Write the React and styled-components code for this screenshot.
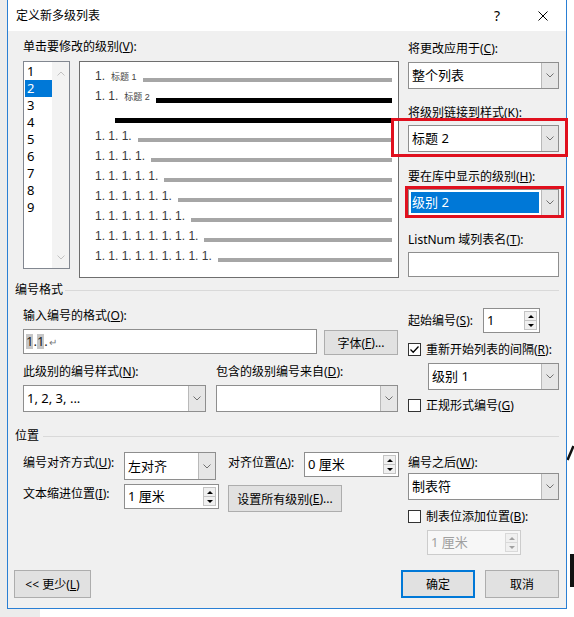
import React from 'react';
import styled, { createGlobalStyle } from 'styled-components';

const UI_FONT = '"Noto Sans", "Noto Sans CJK SC", sans-serif';
const NUM_FONT = '"Liberation Sans", "Noto Sans CJK SC", sans-serif';

const GlobalStyle = createGlobalStyle`
  html, body {
    margin: 0;
    padding: 0;
    background: #ffffff;
  }
  body {
    font-family: ${UI_FONT};
    font-size: 12px;
    color: #000000;
  }
  u {
    text-underline-offset: 1px;
  }
`;

const Screen = styled.div`
  display: flex;
  width: 574px;
  height: 617px;
  overflow: hidden;
  background: linear-gradient(to right, #ececec 40px, #ffffff 40px);
`;

const Gutter = styled.div`
  width: 7px;
  flex-shrink: 0;
`;

const RightEdge = styled.div`
  width: 7px;
  flex-shrink: 0;
  background: #ffffff;
`;

const Dialog = styled.div`
  box-sizing: border-box;
  width: 560px;
  height: 609px;
  flex-shrink: 0;
  display: flex;
  flex-direction: column;
  background: #f0f0f0;
  border: 1px solid #2a7fd4;
  border-top: none;
`;

const TitleBar = styled.div`
  display: flex;
  align-items: center;
  height: 31px;
  padding-left: 8px;
  background: #ffffff;
`;

const TitleText = styled.div`
  flex: 1;
  font-size: 12px;
  line-height: 16px;
`;

const CaptionButton = styled.div`
  width: 46px;
  height: 31px;
  display: flex;
  align-items: center;
  justify-content: center;
  font-size: 14px;
`;

const Body = styled.div`
  padding: 8px 7px 0 7px;
`;

const Columns = styled.div`
  display: grid;
  grid-template-columns: 376px 151px;
  column-gap: 9px;
  padding-left: 8px;
  margin-top: ${(p) => p.$mt || 0}px;
`;

const Stack = styled.div`
  display: flex;
  flex-direction: column;
  align-items: flex-start;
  padding-top: ${(p) => p.$pt || 0}px;
`;

const Row = styled.div`
  display: flex;
  align-items: ${(p) => p.$align || 'flex-start'};
  gap: ${(p) => p.$gap || 0}px;
  margin-top: ${(p) => p.$mt || 0}px;
  margin-left: ${(p) => p.$ml || 0}px;
`;

const Label = styled.div`
  font-size: 12px;
  line-height: 16px;
  white-space: nowrap;
  width: ${(p) => (p.$w ? `${p.$w}px` : 'auto')};
  flex-shrink: 0;
  margin-top: ${(p) => p.$mt || 0}px;
  margin-bottom: ${(p) => p.$mb || 0}px;
  margin-left: ${(p) => p.$ml || 0}px;
`;

const SectionHead = styled.div`
  display: flex;
  align-items: center;
  height: 16px;
  line-height: 16px;
  margin-top: ${(p) => p.$mt || 0}px;
  &::after {
    content: '';
    flex: 1;
    margin-left: ${(p) => p.$lineGap || 4}px;
    border-top: 1px solid #d9d9d9;
  }
`;

/* ---- level list ---- */

const ListBox = styled.div`
  box-sizing: border-box;
  width: 47px;
  height: 208px;
  display: flex;
  border: 1px solid #828790;
  background: #ffffff;
`;

const ListItems = styled.div`
  width: 27px;
  padding: 1px 0 0 1px;
`;

const ListItem = styled.div`
  height: 17px;
  line-height: 17px;
  padding-left: 2px;
  font-size: 13px;
  background: ${(p) => (p.$selected ? '#0078d7' : 'transparent')};
  color: ${(p) => (p.$selected ? '#ffffff' : '#000000')};
`;

const ScrollTrack = styled.div`
  width: 17px;
  display: flex;
  flex-direction: column;
  align-items: center;
  justify-content: space-between;
  padding: 9px 0 8px;
  box-sizing: border-box;
  background: #f3f3f3;
`;

/* ---- preview ---- */

const Preview = styled.div`
  box-sizing: border-box;
  width: 320px;
  height: 217px;
  padding: 4px 6px 0 15px;
  border: 1px solid #6e6e6e;
  background: #ffffff;
  font-family: ${NUM_FONT};
  font-size: 12px;
  color: #3a3a3a;
`;

const PreviewLine = styled.div`
  display: flex;
  align-items: center;
  height: 20px;
  white-space: nowrap;
`;

const Num = styled.span`
  line-height: 20px;
`;

const Tag = styled.span`
  font-size: 9px;
  margin-left: 6px;
  color: #444444;
`;

const Bar = styled.span`
  flex: 1;
  height: ${(p) => (p.$heavy ? 5 : 4)}px;
  margin-top: 8px;
  margin-left: ${(p) => (p.$indent !== undefined ? p.$indent : 6)}px;
  background: ${(p) => (p.$heavy ? '#000000' : '#a6a6a6')};
`;

/* ---- controls ---- */

const FieldBox = styled.div`
  box-sizing: border-box;
  display: flex;
  flex-shrink: 0;
  width: ${(p) => p.$w}px;
  height: ${(p) => p.$h || 27}px;
  border: 1px solid ${(p) => (p.$disabled ? '#cccccc' : '#8e8e8e')};
  background: ${(p) => (p.$disabled ? '#f7f7f7' : '#ffffff')};
`;

const FieldValue = styled.div`
  flex: 1;
  min-width: 0;
  font-size: 13px;
  white-space: nowrap;
  overflow: hidden;
  padding-left: ${(p) => (p.$selected ? 1 : 3)}px;
  margin: ${(p) => (p.$selected ? '2px' : '0')};
  line-height: ${(p) => (p.$selected ? p.$h - 6 : p.$h - 2)}px;
  background: ${(p) => (p.$selected ? '#0078d7' : 'transparent')};
  color: ${(p) => (p.$selected ? '#ffffff' : p.$disabled ? '#a0a0a0' : '#000000')};
`;

const DropButton = styled.div`
  width: 16px;
  display: flex;
  align-items: center;
  justify-content: center;
  background: #e6e6e6;
  border-left: 1px solid #b9b9b9;
`;

const SpinButtons = styled.div`
  display: flex;
  flex-direction: column;
  width: 13px;
  margin: 2px 2px 2px 0;
`;

const SpinBtn = styled.div`
  flex: 1;
  display: flex;
  align-items: center;
  justify-content: center;
  background: #f0f0f0;
  border: 1px solid ${(p) => (p.$disabled ? '#d9d9d9' : '#c4c4c4')};
  & + & {
    border-top: none;
  }
`;

const Arrow = styled.span`
  width: 0;
  height: 0;
  border-left: 3px solid transparent;
  border-right: 3px solid transparent;
  ${(p) =>
    p.$dir === 'up'
      ? `border-bottom: 3px solid ${p.$disabled ? '#a0a0a0' : '#000000'};`
      : `border-top: 3px solid ${p.$disabled ? '#a0a0a0' : '#000000'};`}
`;

const FormatText = styled.div`
  padding-left: 2px;
  font-size: 13px;
  line-height: 23px;
  color: #222222;
`;

const Shade = styled.span`
  display: inline-block;
  line-height: 15px;
  background: #c6c6c6;
`;

const ReturnMark = styled.span`
  font-size: 10px;
  color: #7a7a7a;
  margin-left: 1px;
`;

const PushButton = styled.button`
  box-sizing: border-box;
  flex-shrink: 0;
  width: ${(p) => p.$w}px;
  height: ${(p) => p.$h || 28}px;
  margin-top: ${(p) => p.$mt || 0}px;
  margin-left: ${(p) => (p.$push ? 'auto' : `${p.$ml || 0}px`)};
  padding: 0;
  display: flex;
  align-items: center;
  justify-content: center;
  font-family: ${UI_FONT};
  font-size: 12px;
  color: #000000;
  background: #e1e1e1;
  border: 1px solid ${(p) => (p.$default ? '#0078d7' : '#adadad')};
  box-shadow: ${(p) => (p.$default ? 'inset 0 0 0 1px #0078d7' : 'none')};
`;

const CheckRow = styled.div`
  display: flex;
  align-items: center;
  height: 16px;
  margin-top: ${(p) => p.$mt || 0}px;
  white-space: nowrap;
`;

const CheckBoxSquare = styled.span`
  box-sizing: border-box;
  width: 13px;
  height: 13px;
  display: flex;
  flex-shrink: 0;
  border: 1px solid #333333;
  background: #ffffff;
  margin-right: 5px;
`;

const Footer = styled.div`
  display: flex;
  margin-top: auto;
  padding: 0 7px 10px 6px;
`;

const RedFrame = styled.div`
  position: relative;
  margin-top: ${(p) => p.$mt || 0}px;
  &::after {
    content: '';
    position: absolute;
    top: ${(p) => -p.$t}px;
    bottom: ${(p) => -p.$b}px;
    left: ${(p) => -p.$l}px;
    right: ${(p) => -p.$r}px;
    border: 3px solid #e0101e;
    pointer-events: none;
  }
`;

function Chevron({ up, color = '#707070' }) {
  return (
    <svg width="8" height="5" viewBox="0 0 8 5">
      <polyline
        points={up ? '0.5,4.5 4,1 7.5,4.5' : '0.5,0.5 4,4 7.5,0.5'}
        fill="none"
        stroke={color}
        strokeWidth="1"
      />
    </svg>
  );
}

function Combo({ value, width, height = 27, selected }) {
  return (
    <FieldBox $w={width} $h={height}>
      <FieldValue $h={height} $selected={selected}>
        {value}
      </FieldValue>
      <DropButton>
        <Chevron />
      </DropButton>
    </FieldBox>
  );
}

function Spin({ value, width, disabled }) {
  return (
    <FieldBox $w={width} $h={25} $disabled={disabled}>
      <FieldValue $h={25} $disabled={disabled}>
        {value}
      </FieldValue>
      <SpinButtons>
        <SpinBtn $disabled={disabled}>
          <Arrow $dir="up" $disabled={disabled} />
        </SpinBtn>
        <SpinBtn $disabled={disabled}>
          <Arrow $dir="down" $disabled={disabled} />
        </SpinBtn>
      </SpinButtons>
    </FieldBox>
  );
}

function Check({ checked, children, mt }) {
  return (
    <CheckRow $mt={mt}>
      <CheckBoxSquare>
        {checked && (
          <svg width="11" height="11" viewBox="0 0 11 11">
            <polyline points="1.5,5.5 4.2,8.2 9.5,2.5" fill="none" stroke="#000" strokeWidth="1.3" />
          </svg>
        )}
      </CheckBoxSquare>
      <span>{children}</span>
    </CheckRow>
  );
}

const deepLevels = [3, 4, 5, 6, 7, 8, 9].map((n) => Array(n).fill('1.').join(' '));

export default function App() {
  return (
    <>
      <GlobalStyle />
      <Screen>
        <Gutter />
        <Dialog>
          <TitleBar>
            <TitleText>定义新多级列表</TitleText>
            <CaptionButton>?</CaptionButton>
            <CaptionButton>
              <svg width="10" height="10" viewBox="0 0 10 10">
                <path d="M0.5 0.5 L9.5 9.5 M9.5 0.5 L0.5 9.5" stroke="#000" strokeWidth="1" />
              </svg>
            </CaptionButton>
          </TitleBar>

          <Body>
            {/* level list, preview, link settings */}
            <Columns>
              <Stack>
                <Label>
                  单击要修改的级别(<u>V</u>):
                </Label>
                <Row $gap={9} $mt={6}>
                  <ListBox>
                    <ListItems>
                      {[1, 2, 3, 4, 5, 6, 7, 8, 9].map((n) => (
                        <ListItem key={n} $selected={n === 2}>
                          {n}
                        </ListItem>
                      ))}
                    </ListItems>
                    <ScrollTrack>
                      <Chevron up color="#c2c2c2" />
                      <Chevron color="#c2c2c2" />
                    </ScrollTrack>
                  </ListBox>
                  <Preview>
                    <PreviewLine>
                      <Num>1.</Num>
                      <Tag>标题 1</Tag>
                      <Bar />
                    </PreviewLine>
                    <PreviewLine>
                      <Num>1. 1.</Num>
                      <Tag>标题 2</Tag>
                      <Bar $heavy />
                    </PreviewLine>
                    <PreviewLine>
                      <Bar $heavy $indent={20} />
                    </PreviewLine>
                    {deepLevels.map((txt) => (
                      <PreviewLine key={txt}>
                        <Num>{txt}</Num>
                        <Bar />
                      </PreviewLine>
                    ))}
                  </Preview>
                </Row>
              </Stack>

              <Stack $pt={2}>
                <Label $mb={5}>
                  将更改应用于(<u>C</u>):
                </Label>
                <Combo value="整个列表" width={151} />
                <Label $mt={16} $mb={4}>
                  将级别链接到样式(<u>K</u>):
                </Label>
                <RedFrame $t={7} $b={5} $l={17} $r={9}>
                  <Combo value="标题 2" width={151} />
                </RedFrame>
                <Label $mt={17} $mb={4}>
                  要在库中显示的级别(<u>H</u>):
                </Label>
                <RedFrame $t={3} $b={2} $l={3} $r={5}>
                  <Combo value="级别 2" width={151} selected />
                </RedFrame>
                <Label $mt={16} $mb={4}>
                  ListNum 域列表名(<u>T</u>):
                </Label>
                <FieldBox $w={151} $h={25} />
              </Stack>
            </Columns>

            <SectionHead $mt={4} $lineGap={2}>
              编号格式
            </SectionHead>

            <Columns $mt={10}>
              <Stack>
                <Label $mb={5}>
                  输入编号的格式(<u>O</u>):
                </Label>
                <Row $gap={7}>
                  <FieldBox $w={294} $h={25}>
                    <FormatText>
                      <Shade>1</Shade>.<Shade>1</Shade>.<ReturnMark>↵</ReturnMark>
                    </FormatText>
                  </FieldBox>
                  <PushButton $w={74} $h={25} $mt={1}>
                    字体(<u>F</u>)...
                  </PushButton>
                </Row>
                <Row $gap={10} $mt={9}>
                  <Label $w={183}>
                    此级别的编号样式(<u>N</u>):
                  </Label>
                  <Label $w={182}>
                    包含的级别编号来自(<u>D</u>):
                  </Label>
                </Row>
                <Row $gap={10} $mt={5}>
                  <Combo value="1, 2, 3, ..." width={183} />
                  <Combo value="" width={182} />
                </Row>
              </Stack>

              <Stack>
                <Row $align="center">
                  <Label $w={75}>
                    起始编号(<u>S</u>):
                  </Label>
                  <Spin value="1" width={57} />
                </Row>
                <Check checked mt={8}>
                  重新开始列表的间隔(<u>R</u>):
                </Check>
                <Row $mt={6} $ml={20}>
                  <Combo value="级别 1" width={131} />
                </Row>
                <Check mt={7}>
                  正规形式编号(<u>G</u>)
                </Check>
              </Stack>
            </Columns>

            <SectionHead $mt={15}>位置</SectionHead>

            <Columns $mt={8}>
              <Stack>
                <Row>
                  <Label $w={101} $mt={3}>
                    编号对齐方式(<u>U</u>):
                  </Label>
                  <Combo value="左对齐" width={92} height={28} />
                  <Label $w={76} $mt={3} $ml={12}>
                    对齐位置(<u>A</u>):
                  </Label>
                  <Spin value="0 厘米" width={95} />
                </Row>
                <Row $mt={4}>
                  <Label $w={101} $mt={2}>
                    文本缩进位置(<u>I</u>):
                  </Label>
                  <Spin value="1 厘米" width={95} />
                  <PushButton $w={114} $h={27} $mt={1} $ml={9}>
                    设置所有级别(<u>E</u>)...
                  </PushButton>
                </Row>
              </Stack>

              <Stack>
                <Label $mt={3} $mb={2}>
                  编号之后(<u>W</u>):
                </Label>
                <Combo value="制表符" width={151} />
                <Check mt={8}>
                  制表位添加位置(<u>B</u>):
                </Check>
                <Row $mt={6} $ml={19}>
                  <Spin value="1 厘米" width={94} disabled />
                </Row>
              </Stack>
            </Columns>
          </Body>

          <Footer>
            <PushButton $w={77}>
              &lt;&lt; 更少(<u>L</u>)
            </PushButton>
            <PushButton $w={74} $push $default>
              确定
            </PushButton>
            <PushButton $w={74} $ml={10}>
              取消
            </PushButton>
          </Footer>
        </Dialog>
        <RightEdge>
          <svg width="7" height="617" viewBox="0 0 7 617">
            <path d="M0.5 460 L6.5 446" stroke="#111" strokeWidth="2.5" />
            <rect x="3" y="554" width="4" height="33" fill="#111" />
          </svg>
        </RightEdge>
      </Screen>
    </>
  );
}
